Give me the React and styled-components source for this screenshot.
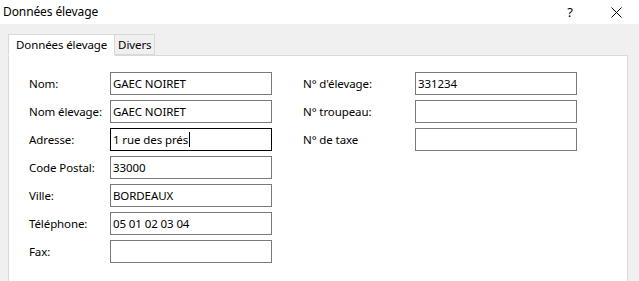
import React from "react";
import styled, { createGlobalStyle } from "styled-components";

const GlobalStyle = createGlobalStyle`
  html, body {
    margin: 0;
    padding: 0;
    background: #f0f0f0;
    overflow: hidden;
  }
  body {
    font-family: "Noto Sans", "Open Sans", sans-serif;
    font-size: 11.5px;
    letter-spacing: -0.1px;
    color: #000;
  }
`;

const Window = styled.div`
  width: 639px;
  height: 281px;
  display: flex;
  flex-direction: column;
  background: #f0f0f0;
  overflow: hidden;
`;

const TitleBar = styled.div`
  height: 24px;
  background: #fff;
  display: flex;
  align-items: center;
  padding-left: 3px;
`;

const Title = styled.div`
  flex: 1;
  font-size: 12px;
  line-height: 24px;
`;

const TitleButton = styled.div`
  width: 46px;
  height: 24px;
  display: flex;
  align-items: center;
  justify-content: center;
  font-size: 13px;
`;

const Body = styled.div`
  padding: 9px 11px 0 8px;
  flex: 1;
  display: flex;
  flex-direction: column;
`;

const TabStrip = styled.div`
  display: flex;
  align-items: flex-end;
  height: 22px;
  position: relative;
  z-index: 1;
`;

const Tab = styled.div`
  height: ${(p) => (p.$active ? "22px" : "21px")};
  box-sizing: border-box;
  border: 1px solid #d9d9d9;
  border-bottom: ${(p) => (p.$active ? "1px solid #fff" : "1px solid #d9d9d9")};
  border-left: ${(p) => (p.$active ? "1px solid #d9d9d9" : "none")};
  background: ${(p) => (p.$active ? "#fff" : "#f0f0f0")};
  padding: 0 ${(p) => (p.$active ? "7px" : "3px")};
  display: flex;
  align-items: center;
  line-height: 1;
  margin-bottom: ${(p) => (p.$active ? "-1px" : "0")};
`;

const Panel = styled.div`
  flex: 1;
  background: #fff;
  border: 1px solid #d9d9d9;
  border-bottom: none;
  padding: 16px 0 0 20px;
  display: flex;
  gap: 31px;
  align-items: flex-start;
`;

const FormGrid = styled.div`
  display: grid;
  grid-template-columns: ${(p) => p.$labelWidth}px 162px;
  grid-auto-rows: 23px;
  row-gap: 5px;
  align-items: center;
`;

const Label = styled.div`
  white-space: nowrap;
`;

const Field = styled.div`
  box-sizing: border-box;
  height: 23px;
  border: 1px solid ${(p) => (p.$focused ? "#000" : "#7a7a7a")};
  background: #fff;
  padding: 0 2px;
  display: flex;
  align-items: center;
  white-space: nowrap;
  overflow: hidden;
`;

const Caret = styled.span`
  display: inline-block;
  width: 1px;
  height: 15px;
  background: #000;
  margin-left: 1px;
`;

const leftRows = [
  { label: "Nom:", value: "GAEC NOIRET" },
  { label: "Nom élevage:", value: "GAEC NOIRET" },
  { label: "Adresse:", value: "1 rue des prés", focused: true },
  { label: "Code Postal:", value: "33000" },
  { label: "Ville:", value: "BORDEAUX" },
  { label: "Téléphone:", value: "05 01 02 03 04" },
  { label: "Fax:", value: "" },
];

const rightRows = [
  { label: "N° d'élevage:", value: "331234" },
  { label: "N° troupeau:", value: "" },
  { label: "N° de taxe", value: "" },
];

const Rows = ({ rows }) =>
  rows.map((r) => (
    <React.Fragment key={r.label}>
      <Label>{r.label}</Label>
      <Field $focused={r.focused}>
        {r.value}
        {r.focused && <Caret />}
      </Field>
    </React.Fragment>
  ));

const App = () => {
  return (
    <>
      <GlobalStyle />
      <Window>
        <TitleBar>
          <Title>Données élevage</Title>
          <TitleButton>?</TitleButton>
          <TitleButton>
            <svg width="11" height="11" viewBox="0 0 11 11">
              <path d="M0.5 0.5 L10.5 10.5 M10.5 0.5 L0.5 10.5" stroke="#000" strokeWidth="1" />
            </svg>
          </TitleButton>
        </TitleBar>
        <Body>
          <TabStrip>
            <Tab $active>Données élevage</Tab>
            <Tab>Divers</Tab>
          </TabStrip>
          <Panel>
            <FormGrid $labelWidth={81}>
              <Rows rows={leftRows} />
            </FormGrid>
            <FormGrid $labelWidth={112}>
              <Rows rows={rightRows} />
            </FormGrid>
          </Panel>
        </Body>
      </Window>
    </>
  );
};

export default App;
